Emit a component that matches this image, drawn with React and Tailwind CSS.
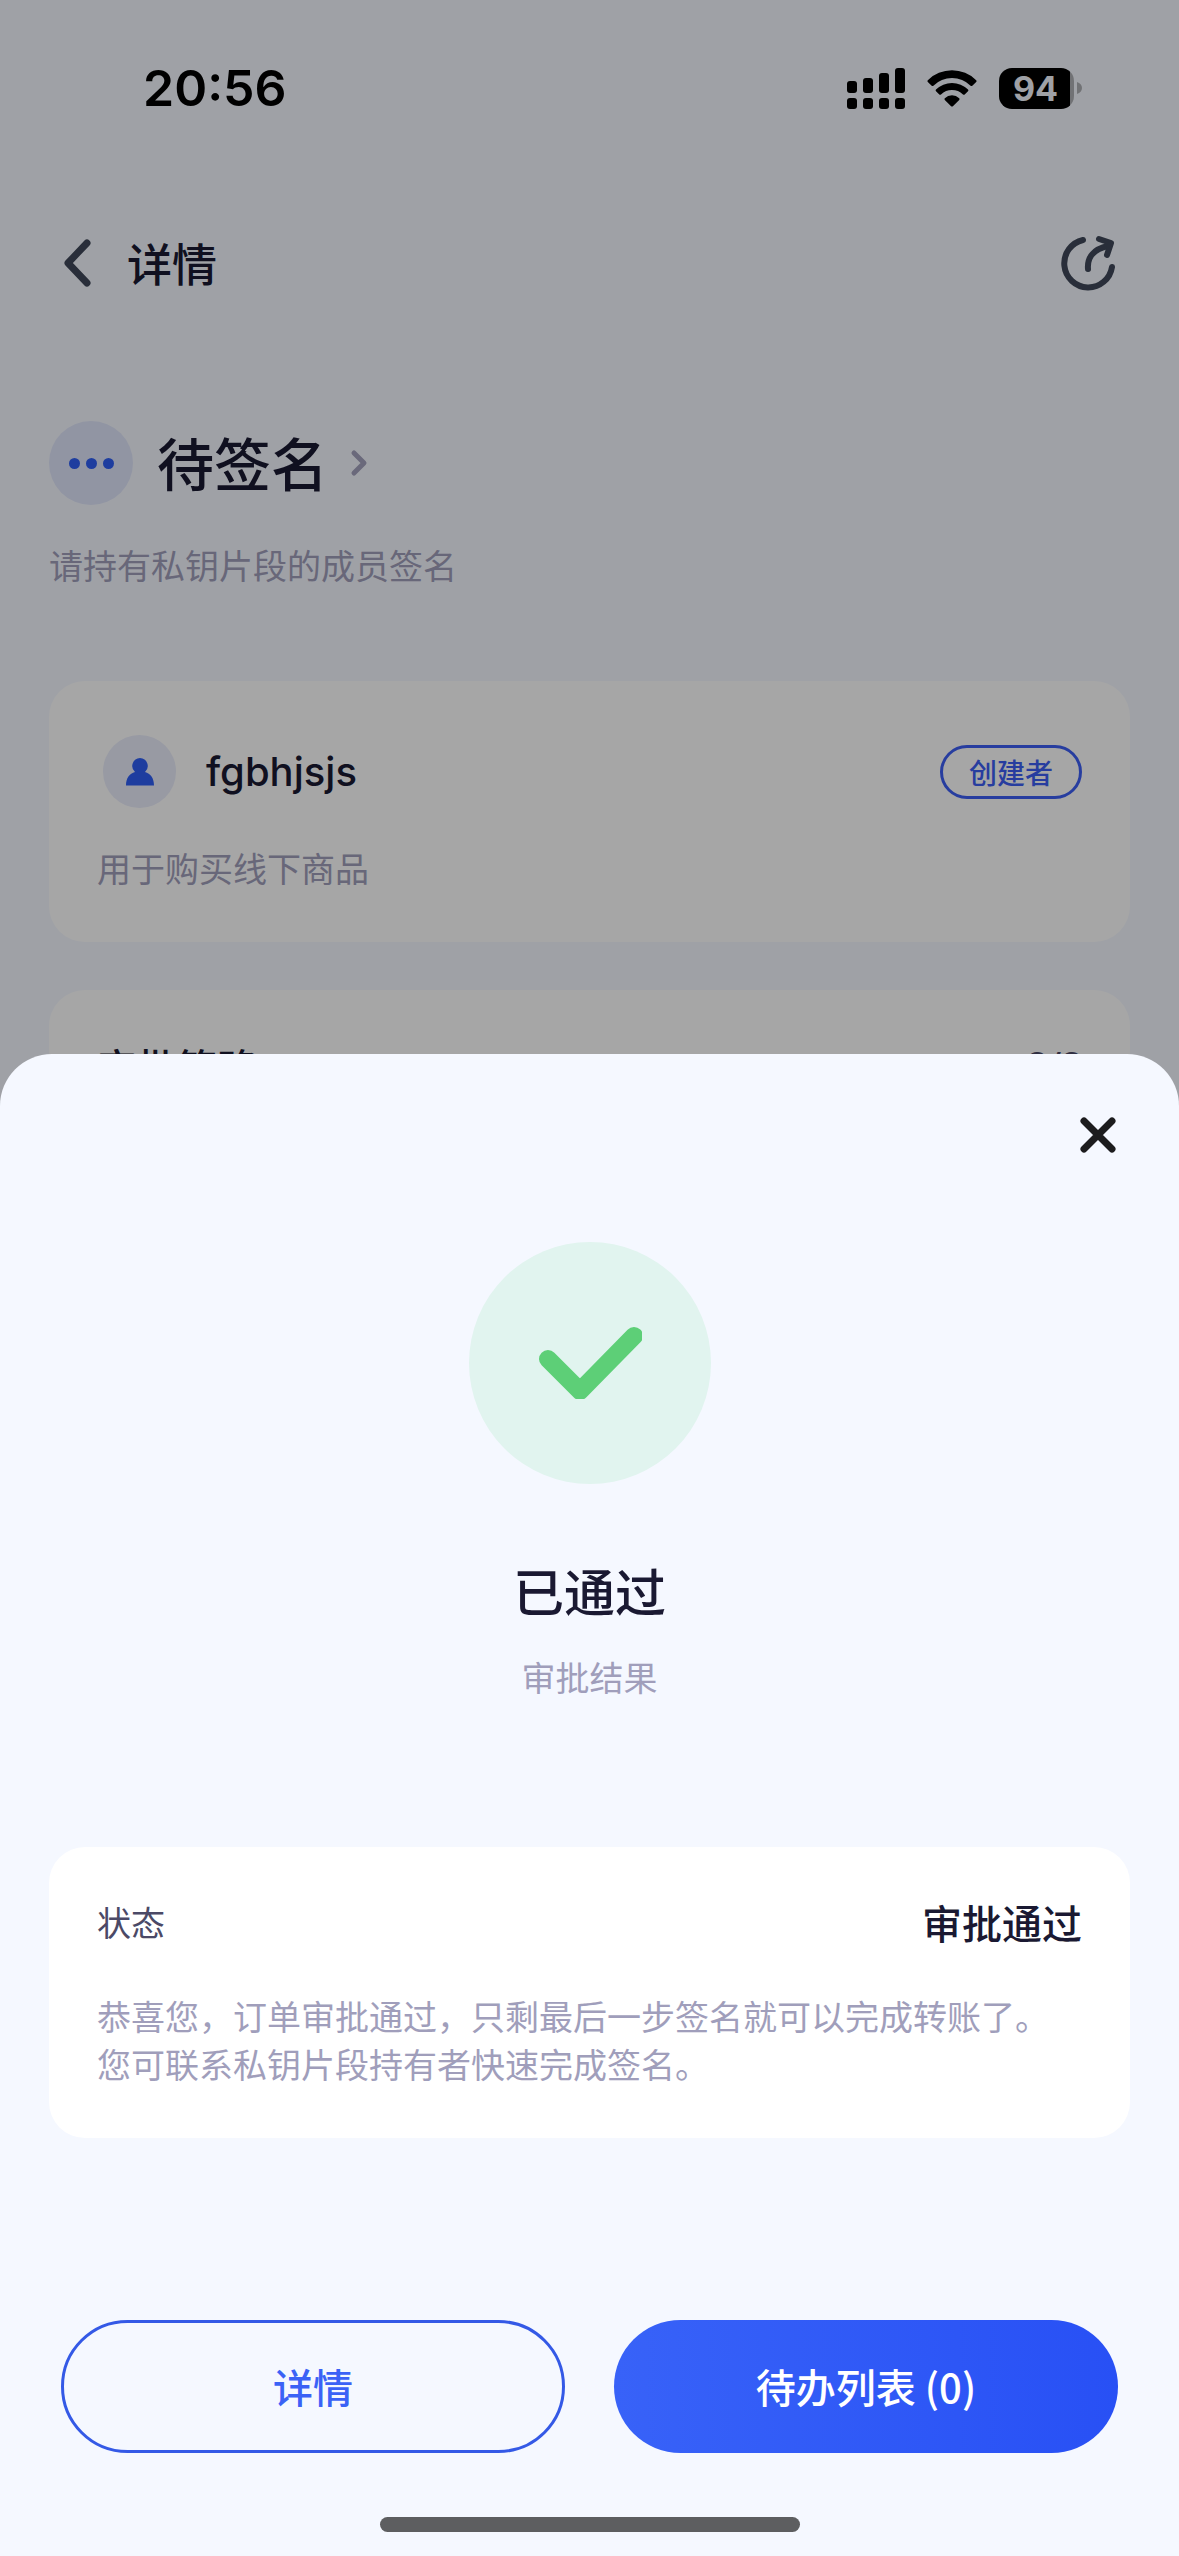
function StatusBar() {
  return (
    <div className="flex h-[176px] items-center justify-between pr-[97px] pl-[143px]">
      <time className="font-['Inter',sans-serif] text-[50px] leading-[60px] font-semibold text-black">20:56</time>
      <div className="flex items-center gap-[22px]">
        <svg className="h-[41px] w-[58px]" viewBox="0 0 58 41" fill="#000" aria-hidden="true">
          <rect x="0" y="13" width="10" height="12" rx="3" />
          <rect x="16" y="10" width="10" height="15" rx="3" />
          <rect x="32" y="5" width="10" height="20" rx="3" />
          <rect x="48" y="0" width="10" height="25" rx="3" />
          <rect x="0" y="30" width="10" height="11" rx="3" />
          <rect x="16" y="30" width="10" height="11" rx="3" />
          <rect x="32" y="30" width="10" height="11" rx="3" />
          <rect x="48" y="30" width="10" height="11" rx="3" />
        </svg>
        <svg className="h-[38px] w-[50px]" viewBox="0 0 50 38" fill="#000" aria-hidden="true">
          <path d="M.8 11.2a34.5 34.5 0 0 1 48.4 0c.5.5.5 1.200 0 1.700l-3.900 3.800c-.5.5-1.200.5-1.700 0a26.600 26.600 0 0 0-37.200 0c-.5.5-1.200.5-1.700 0L.8 12.900c-.5-.5-.5-1.200 0-1.700Z" />
          <path d="M9 20.500a22.800 22.800 0 0 1 32 0c.5.5.5 1.200 0 1.700l-3.300 3.200c-.5.5-1.200.5-1.700 0a15.800 15.800 0 0 0-22 0c-.5.5-1.200.5-1.700 0L9 22.200c-.5-.5-.5-1.200 0-1.700Z" />
          <path d="M17.800 29.300a10.300 10.300 0 0 1 14.400 0c.5.5.5 1.100 0 1.600l-6.300 6.300c-.5.5-1.300.5-1.800 0l-6.300-6.300c-.5-.5-.5-1.100 0-1.600Z" />
        </svg>
        <div className="flex items-center gap-[3px]">
          <div className="flex h-[41px] w-[75px] items-center justify-center overflow-hidden rounded-[13px] bg-[linear-gradient(90deg,#000_71px,#aeb0b4_71px)]">
            <span className="pr-[2px] font-['Inter',sans-serif] text-[34px] leading-[41px] font-bold text-[#f5f8ff]">94</span>
          </div>
          <svg className="h-[12px] w-[5px]" viewBox="0 0 5 12" fill="#aeb0b4" aria-hidden="true">
            <path d="M0 0c3 1 5 3 5 6s-2 5-5 6Z" />
          </svg>
        </div>
      </div>
    </div>
  );
}

function Header() {
  return (
    <header className="flex h-[174px] items-center justify-between px-[61px]">
      <div className="flex items-center gap-[34px]">
        <button aria-label="返回">
          <svg className="h-[50px] w-[32px]" viewBox="0 0 32 50" fill="none" stroke="#3f4859" strokeWidth="7" strokeLinecap="round" strokeLinejoin="round">
            <path d="M26 5 7 25l19 20" />
          </svg>
        </button>
        <h1 className="text-[45px] leading-[60px] font-medium text-[#1a1932]">详情</h1>
      </div>
      <button aria-label="分享">
        <svg className="h-[60px] w-[60px]" viewBox="0 0 60 60" fill="none" stroke="#3f4859" strokeWidth="6" strokeLinecap="round" strokeLinejoin="round">
          <path d="M25 7a24 24 0 1 0 29 27" />
          <path d="M30 36c-1-12 6-20 20-23" />
          <path d="m41 6 12 4-4 12" />
        </svg>
      </button>
    </header>
  );
}

function DetailPage() {
  return (
    <div className="min-h-screen bg-[#f5f8ff]">
      <StatusBar />
      <Header />
      <main className="px-[49px] pt-[71px]">
        <div className="flex items-center">
          <div className="flex size-[84px] items-center justify-center gap-[6px] rounded-full bg-[#dfe5fb]">
            <span className="size-[11px] rounded-full bg-[#2f5ff5]" />
            <span className="size-[11px] rounded-full bg-[#2f5ff5]" />
            <span className="size-[11px] rounded-full bg-[#2f5ff5]" />
          </div>
          <h2 className="ml-6 pb-1 text-[57px] leading-[80px] font-medium text-[#1a1932]">待签名</h2>
          <svg className="ml-[22px] h-[32px] w-[20px]" viewBox="0 0 20 32" fill="none" stroke="#a3a1bd" strokeWidth="5" strokeLinecap="round" strokeLinejoin="round" aria-hidden="true">
            <path d="m4 6 10 10L4 26" />
          </svg>
        </div>
        <p className="mt-9 text-[34px] leading-[48px] text-[#a09ebb]">请持有私钥片段的成员签名</p>

        <section className="mt-[92px] rounded-[36px] bg-white px-[48px] pt-[54px] pb-[50px]">
          <div className="flex items-center justify-between">
            <div className="flex items-center gap-[30px] pl-[6px]">
              <div className="flex size-[73px] items-center justify-center rounded-full bg-[#eaedfb]">
                <svg className="h-[28px] w-[28px]" viewBox="0 0 28 28" fill="#2f5ff5" aria-hidden="true">
                  <path d="M14 0a8 8 0 0 1 5 14c5.500 1.500 9 6 9 13.500H0C0 20 3.500 15.500 9 14a8 8 0 0 1 5-14Z" />
                </svg>
              </div>
              <span className="font-['Inter',sans-serif] text-[40px] leading-[48px] font-medium text-[#1a1932]">fgbhjsjs</span>
            </div>
            <span className="rounded-full border-[3px] border-[#3d5ff5] px-[26px] text-[28px] leading-[48px] font-medium text-[#3d5ff5]">创建者</span>
          </div>
          <p className="mt-9 text-[34px] leading-[48px] text-[#a09ebb]">用于购买线下商品</p>
        </section>

        <section className="mt-12 flex items-center justify-between rounded-[36px] bg-white px-[48px] py-[46px]">
          <h3 className="text-[40px] leading-[60px] font-medium text-[#1a1932]">审批策略</h3>
          <span className="font-['Roboto',sans-serif] text-[36px] leading-[60px] font-medium text-[#4b4966]">2/2</span>
        </section>
      </main>
    </div>
  );
}

function ResultSheet() {
  return (
    <section role="dialog" aria-modal="true" aria-labelledby="result-title" className="absolute inset-x-0 bottom-0 rounded-t-[52px] bg-[#f5f8ff]">
      <div className="flex justify-end px-[61px] pt-[61px]">
        <button aria-label="关闭">
          <svg className="size-[40px]" viewBox="0 0 40 40" fill="none" stroke="#1c1c1e" strokeWidth="7" strokeLinecap="round">
            <path d="m6 6 28 28M34 6 6 34" />
          </svg>
        </button>
      </div>

      <div className="flex flex-col items-center pt-[87px]">
        <div className="flex size-[242px] items-center justify-center rounded-full bg-[#e1f4ef]">
          <svg className="h-[72px] w-[104px]" viewBox="0 0 104 72" fill="none" stroke="#5dcf77" strokeWidth="18" strokeLinecap="round" strokeLinejoin="round" aria-hidden="true">
            <path d="m10 32 32 32L96 9" />
          </svg>
        </div>
        <h2 id="result-title" className="mt-[70px] text-[51px] leading-[72px] font-medium text-[#1a1932]">已通过</h2>
        <p className="mt-[27px] text-[34px] leading-[48px] text-[#a09ebb]">审批结果</p>
      </div>

      <div className="mx-[49px] mt-[146px] rounded-[36px] bg-white px-[48px] pt-[45px] pb-[50px]">
        <div className="flex items-center justify-between">
          <span className="text-[34px] leading-[60px] text-[#4b4966]">状态</span>
          <span className="text-[40px] leading-[60px] font-medium text-[#1a1932]">审批通过</span>
        </div>
        <p className="mt-10 text-[34px] leading-[48px] text-[#a09ebb]">
          恭喜您，订单审批通过，只剩最后一步签名就可以完成转账了。
          <br />
          您可联系私钥片段持有者快速完成签名。
        </p>
      </div>

      <div className="mt-[182px] grid grid-cols-2 gap-[49px] px-[61px] text-[40px] font-medium">
        <button className="h-[133px] rounded-full border-[3px] border-[#3459e6] pb-[2px] text-[#3b62f6]">详情</button>
        <button className="h-[133px] rounded-full bg-linear-to-r from-[#3862f8] to-[#2850f5] pb-[2px] text-white">待办列表 (0)</button>
      </div>

      <div className="flex justify-center pt-16 pb-6">
        <div className="h-[15px] w-[420px] rounded-full bg-[#5d5e60]" />
      </div>
    </section>
  );
}

export default function App() {
  return (
    <div className="relative h-screen overflow-hidden font-['Noto_Sans_CJK_SC',sans-serif]">
      <DetailPage />
      <div className="absolute inset-0 bg-black/35" />
      <ResultSheet />
    </div>
  );
}
